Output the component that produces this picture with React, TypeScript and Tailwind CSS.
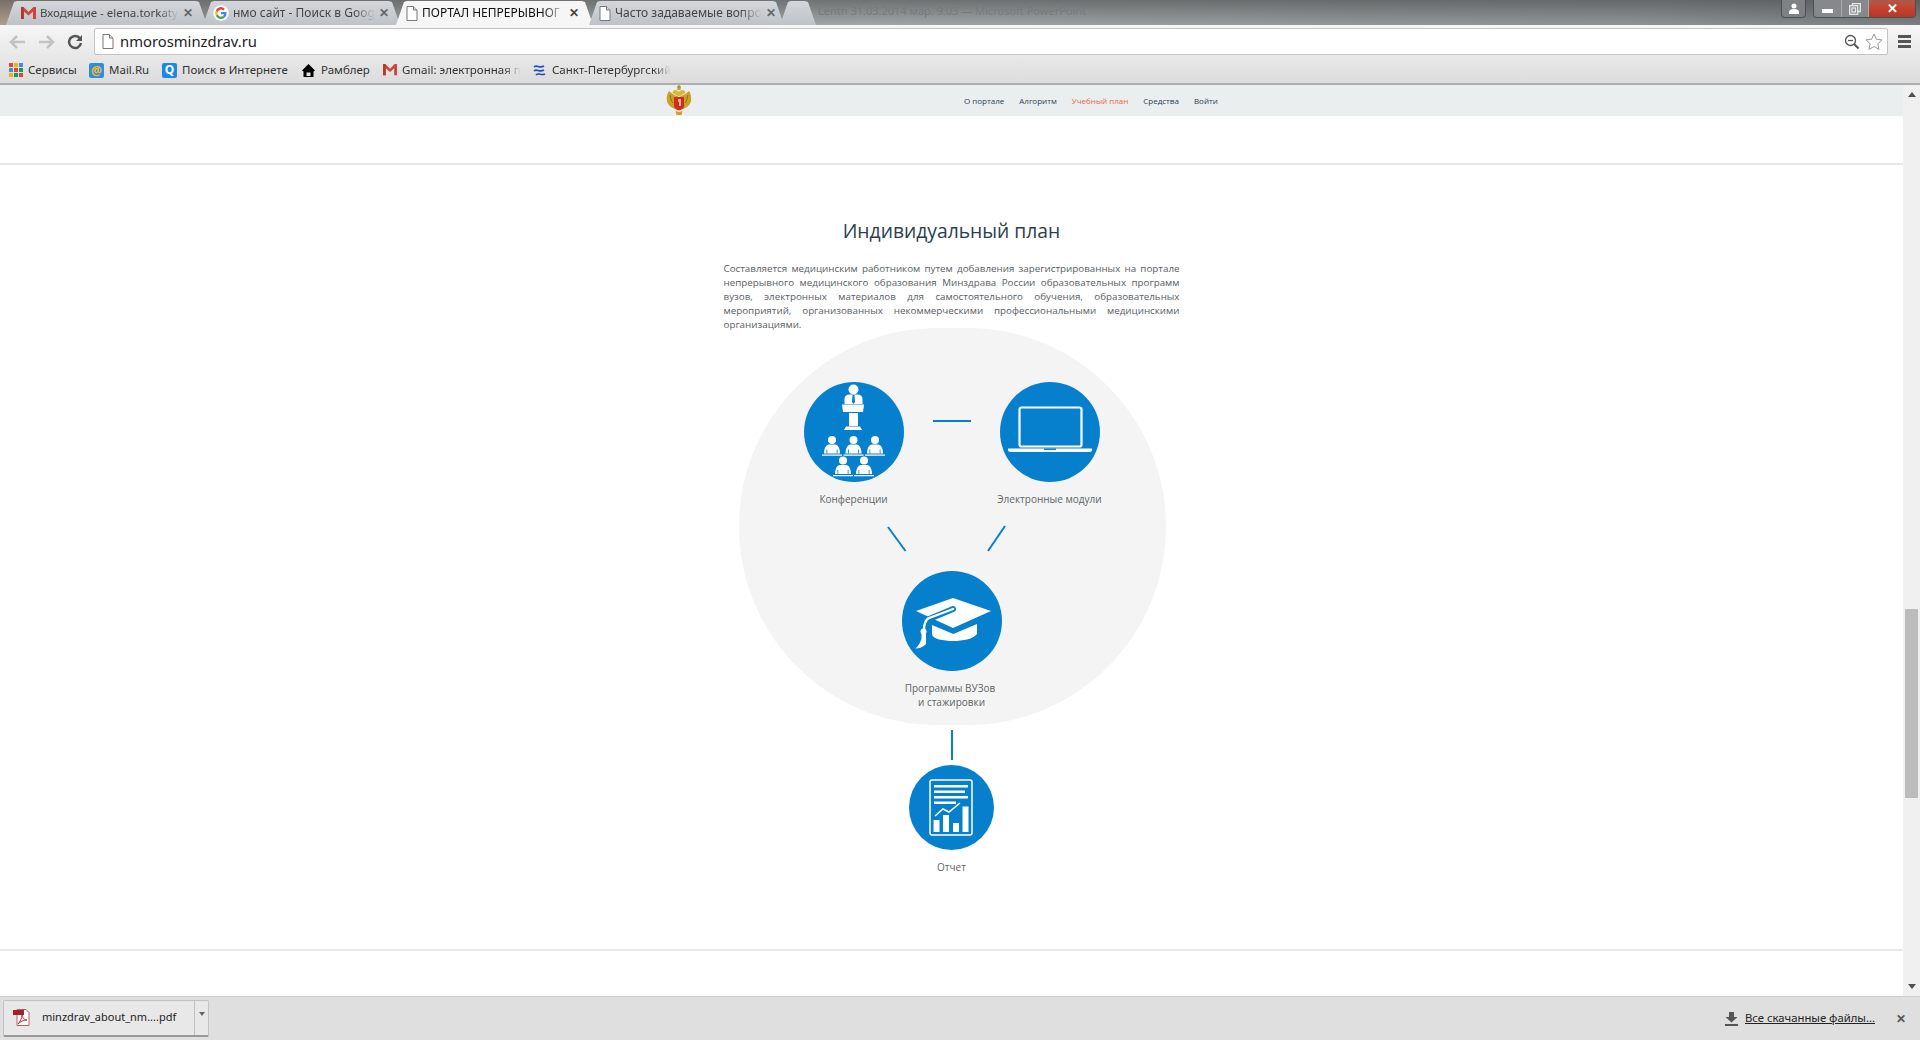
import React from "react";

const font = { fontFamily: '"Open Sans","Noto Sans",sans-serif' };
const fade = {
  maskImage: "linear-gradient(to right,#000 85%,transparent)",
  WebkitMaskImage: "linear-gradient(to right,#000 85%,transparent)",
};

function DocIcon() {
  return (
    <svg width="12" height="15" viewBox="0 0 12 15" className="shrink-0">
      <path d="M1 .5h6.5L11 4v10.500H1z" fill="#fff" stroke="#777" />
      <path d="M7.500.5V4H11" fill="#ddd" stroke="#777" />
    </svg>
  );
}

function GmailM({ s = 15 }: { s?: number }) {
  return (
    <svg width={s} height={s * 0.8} viewBox="0 0 15 12" className="shrink-0">
      <path d="M0 0h2.500L7.500 5 12.500 0H15v12h-3V4.500L7.500 8.500 3 4.500V12H0z" fill="#c9473a" />
      <path d="M0 0h2.500L3 12H0z" fill="#b23b30" />
    </svg>
  );
}

function GoogleG() {
  return (
    <svg width="16" height="16" viewBox="0 0 16 16" className="shrink-0">
      <circle cx="8" cy="8" r="7.800" fill="#fff" />
      <path d="M13.500 8.200c0-.4 0-.8-.1-1.200H8v2.300h3.100c-.2.800-.6 1.400-1.200 1.800l1.900 1.500c1.100-1 1.700-2.600 1.700-4.400z" fill="#4285f4" />
      <path d="M8 14c1.600 0 2.900-.5 3.800-1.400l-1.900-1.500c-.5.400-1.200.6-1.900.6-1.500 0-2.800-1-3.200-2.400l-2 1.500C3.800 12.700 5.800 14 8 14z" fill="#34a853" />
      <path d="M4.800 9.300a3.500 3.500 0 010-2.200l-2-1.500a6 6 0 000 5.200z" fill="#fbbc05" />
      <path d="M8 4.600c.9 0 1.600.3 2.200.9l1.700-1.700A6 6 0 008 2C5.800 2 3.800 3.300 2.800 5.400l2 1.600C5.200 5.600 6.500 4.600 8 4.600z" fill="#ea4335" />
    </svg>
  );
}

const tabShape = "[clip-path:polygon(0_100%,8px_1px,11px_0,calc(100%-11px)_0,calc(100%-8px)_1px,100%_100%)]";

function Tab({ icon, title, active, width, close = true, first }: { icon?: React.ReactNode; title?: string; active?: boolean; width: string; close?: boolean; first?: boolean }) {
  return (
    <div
      className={`${tabShape} h-[24px] -mr-[4px] flex items-center ${first ? "pl-[15px]" : "pl-[10px]"} pr-[14px] gap-[4px] shrink-0 ${active ? "bg-[#f6f6f6]" : "bg-gradient-to-b from-[#d3d6da] to-[#bfc3c8]"}`}
      style={{ width }}
    >
      {icon}
      {title && (
        <span className={`flex-1 whitespace-nowrap ${first ? "text-[11.500px]" : "text-[12px]"} ${active ? "text-[#111]" : "text-[#444]"}`} style={fade}>
          {title}
        </span>
      )}
      {close && <span className={`text-[12px] font-bold leading-none ${active ? "text-[#444]" : "text-[#666]"}`}>✕</span>}
    </div>
  );
}

function Bookmark({ icon, text, w, fadeOut }: { icon: React.ReactNode; text: string; w: string; fadeOut?: boolean }) {
  return (
    <div className="flex items-center gap-[5px] shrink-0" style={{ width: w }}>
      <span className="w-[15px] h-[15px] flex items-center justify-center shrink-0">{icon}</span>
      <span className="text-[11.500px] text-[#333] whitespace-nowrap" style={fadeOut ? fade : undefined}>
        {text}
      </span>
    </div>
  );
}

function Apps() {
  const c = ["#e34133", "#f4b400", "#3c8bf0", "#3c8bf0", "#e34133", "#0f9d58", "#f4b400", "#0f9d58", "#e34133"];
  return (
    <span className="grid grid-cols-3 gap-[1px] w-[14px]">
      {c.map((x, i) => (
        <span key={i} className="w-[4px] h-[4px]" style={{ background: x }} />
      ))}
    </span>
  );
}

function Crest() {
  return (
    <svg width="26" height="32" viewBox="0 0 26 32">
      <path d="M3 6C1 9 0 14 1.500 18 3 21 6 23 9 24L13 20 17 24C20 23 23 21 24.500 18 26 14 25 9 23 6 21 8 19 9 17.500 10L13 12 8.500 10C7 9 5 8 3 6z" fill="#c9a227" />
      <path d="M9.500 5c-2 0-3 1.500-3 3l2 1 3 2h3l3-2 2-1c0-1.500-1-3-3-3-1.500 0-3 1-3.500 2-.5-1-2-2-3.500-2z" fill="#d8b93a" />
      <path d="M11 1.500h4l-.5 3.500h-3z" fill="#bfa030" />
      <circle cx="13" cy="1.500" r="1.300" fill="#a88c20" />
      <path d="M4 10c1 3 1 6 3 8M22 10c-1 3-1 6-3 8" stroke="#7f7428" fill="none" />
      <path d="M8 12h10v9c0 2.500-2 3.500-5 4.500-3-1-5-2-5-4.500z" fill="#d3291f" />
      <path d="M12 14h3v7h-2v-4h-1z" fill="#dbb98e" />
      <path d="M9.500 26l3.500 1 3.500-1-1 4H10.500z" fill="#c9a227" />
    </svg>
  );
}

function Conference() {
  const p = (x: number, y: number) => (
    <g key={`${x}-${y}`} transform={`translate(${x} ${y})`}>
      <circle cx="0" cy="-14.500" r="4" fill="#fff" />
      <path d="M-8 -1c0-5 2-9 5-9h6c3 0 5 4 5 9z" fill="#fff" />
      <path d="M-5.500 -5h.8v4h-.8zM4.700 -5h.8v4h-.8z" fill="#0680cd" />
      <path d="M-10 0H10V1.200H-10z" fill="#fff" />
    </g>
  );
  return (
    <svg viewBox="0 0 100 100" className="w-[100px] h-[100px]">
      <circle cx="49.500" cy="7.500" r="5" fill="#fff" />
      <path d="M40.500 22v-5c0-3 2-4.500 5-4.500h8c3 0 5 1.500 5 4.500v5z" fill="#fff" />
      <path d="M48.500 13h2l.5 7-1.500 2-1.500-2z" fill="#0680cd" />
      <path d="M38 22.500h22l-1 7.500H39z" fill="#fff" />
      <path d="M45 31h9v13h-9z" fill="#fff" />
      <path d="M42 44.500h14l2 3.500H40z" fill="#fff" />
      {p(28, 72.500)}
      {p(49.500, 72.500)}
      {p(71, 72.500)}
      {p(39, 93)}
      {p(60, 93)}
    </svg>
  );
}

function Laptop() {
  return (
    <svg viewBox="0 0 100 100" className="w-[100px] h-[100px]">
      <rect x="19.500" y="25.500" width="62" height="39" rx="2" fill="none" stroke="#fff" strokeWidth="2.200" />
      <path d="M8 66.500h84v1.500c0 1-1 2-3 2H11c-2 0-3-1-3-2z" fill="#fff" />
      <path d="M44 66.500h12v1.500H44z" fill="#0680cd" />
    </svg>
  );
}

function Cap() {
  return (
    <svg viewBox="0 0 100 100" className="w-[100px] h-[100px]">
      <path d="M14 40 51 27 89 40 51 57z" fill="#fff" />
      <path d="M51 38 26 48.500" stroke="#0680cd" strokeWidth="6" strokeLinecap="round" fill="none" />
      <path d="M51 38 26 47.500C23 50 22 54 22 59" stroke="#fff" strokeWidth="2.400" strokeLinecap="round" fill="none" />
      <circle cx="21.500" cy="60.500" r="3" fill="#fff" />
      <path d="M19.500 62.500h4.500L24 73c-3 3-7 4.500-10.500 4.500 3-3 5-6 6-10z" fill="#fff" />
      <path d="M30 54 51.300 63 75 53v10c-4 5-14 7-24 7-9 0-21-2-21-7z" fill="#fff" />
    </svg>
  );
}

function Report() {
  return (
    <svg viewBox="0 0 85 85" className="w-[85px] h-[85px]">
      <rect x="21" y="15" width="42" height="55" rx="2" fill="none" stroke="#fff" strokeWidth="1.500" />
      <path d="M25 20h34v2.500H25zM25 25.500h31v2.500H25zM25 31h34v2.500H25zM25 36.500h22v2.500H25z" fill="#fff" />
      <path d="M26 51l8-7 6 3 11-9" fill="none" stroke="#fff" strokeWidth="1.500" />
      <path d="M24.500 55h6v12h-6zM34 50h6v17h-6zM44 58h6v9h-6zM53.500 41.500h6V67h-6z" fill="#fff" />
    </svg>
  );
}

function Node({ cls, d, label, children }: { cls: string; d: string; label: React.ReactNode; children: React.ReactNode }) {
  return (
    <div className={`absolute flex flex-col items-center w-[160px] ${cls}`}>
      <div className={`${d} rounded-full bg-[#0680cd] overflow-hidden`}>{children}</div>
      <div className="text-[10px] leading-[14px] text-[#5f6468] text-center mt-[10px]">{label}</div>
    </div>
  );
}

const lines = [
  "Составляется медицинским работником путем добавления зарегистрированных на портале",
  "непрерывного медицинского образования Минздрава России образовательных программ",
  "вузов, электронных материалов для самостоятельного обучения, образовательных",
  "мероприятий, организованных некоммерческими профессиональными медицинскими",
];

export default function App() {
  return (
    <div className="w-[1920px] h-[1040px] overflow-hidden flex flex-col bg-white" style={font}>
      {/* tab strip */}
      <div
        className="h-[25px] shrink-0 flex justify-between [background:linear-gradient(180deg,rgba(50,52,54,.45),rgba(50,52,54,0)),linear-gradient(90deg,#b09f8e_0%,#9a9c9c_8%,#a2a6a6_45%,#949899_70%,#909495_85%,#7b7f81_100%)] pl-[6px] pr-[4px] relative"
        style={{ fontFamily: '"Noto Sans",sans-serif' }}
      >
        <div className="flex items-end">
          <Tab first width="201px" icon={<GmailM />} title="Входящие - elena.torkaty" />
          <Tab width="197px" icon={<GoogleG />} title="нмо сайт - Поиск в Goog" />
          <Tab width="197px" active icon={<DocIcon />} title="ПОРТАЛ НЕПРЕРЫВНОГ" />
          <Tab width="195px" icon={<DocIcon />} title="Часто задаваемые вопро" />
          <Tab width="36px" close={false} />
        </div>
        <span className="absolute left-[818px] top-[3px] text-[11px] text-[#767a7c] whitespace-nowrap">Lenth 31.03.2014 мар. 9:03 — Microsoft PowerPoint</span>
        <div className="flex items-start gap-[7px]">
          <div className="w-[25px] h-[18px] rounded-b-[4px] border border-t-0 border-[#4d5052] bg-[#7d8183] flex items-center justify-center">
            <svg width="12" height="11" viewBox="0 0 12 11"><circle cx="6" cy="3" r="2.500" fill="#fff" /><path d="M1 11V9c0-2 2-3 5-3s5 1 5 3v2z" fill="#fff" /></svg>
          </div>
          <div className="flex h-[18px] w-[103px] rounded-b-[4px] border border-t-0 border-[#4d5052] overflow-hidden">
            <div className="w-[28px] flex items-center justify-center bg-[#85898b] border-r border-[#aaa]">
              <span className="w-[11px] h-[4px] bg-white mt-[5px]" />
            </div>
            <div className="w-[27px] flex items-center justify-center bg-[#85898b] border-r border-[#aaa]">
              <svg width="12" height="12" viewBox="0 0 12 12" fill="none" stroke="#e8e8e8" strokeWidth="1.300"><path d="M3.500 2.500V.7h7.800v7.800H9" /><rect x=".7" y="2.700" width="8" height="8.600" /><rect x="3" y="5" width="3.500" height="4" /></svg>
            </div>
            <div className="flex-1 flex items-center justify-center bg-gradient-to-b from-[#a95a4c] via-[#c8402c] to-[#b03a28] text-white text-[13px] font-bold leading-none">✕</div>
          </div>
        </div>
      </div>

      {/* toolbar */}
      <div className="h-[60px] shrink-0 bg-gradient-to-b from-[#f6f6f6] to-[#dcdcdc] flex flex-col border-b-2 border-[#aeaeae]">
        <div className="h-[33px] flex items-center relative">
          <div className="w-[94px] flex items-center pl-[9px] gap-[12px] shrink-0">
            <svg width="17" height="14" viewBox="0 0 17 14"><path d="M8 1 2 7l6 6M2 7h14" stroke="#c3c3c3" strokeWidth="2.500" fill="none" /></svg>
            <svg width="17" height="14" viewBox="0 0 17 14"><path d="M9 1l6 6-6 6M15 7H1" stroke="#c3c3c3" strokeWidth="2.500" fill="none" /></svg>
            <svg width="16" height="16" viewBox="0 0 16 16"><path d="M13 4.500A6 6 0 1 0 14 9" stroke="#555" strokeWidth="2.500" fill="none" /><path d="M15 1v6H9z" fill="#555" /></svg>
          </div>
          <div className="w-[1794px] h-[27px] bg-white border border-[#c4c4c4] rounded-[2px] flex items-center pl-[7px] pr-[4px] shrink-0">
            <DocIcon />
            <span className="ml-[6px] text-[14.800px] text-[#222]" style={{ fontFamily: '"Noto Sans",sans-serif' }}>nmorosminzdrav.ru</span>
            <span className="flex-1" />
            <svg width="16" height="16" viewBox="0 0 16 16" className="mr-[5px]"><circle cx="6.500" cy="6.500" r="5" stroke="#555" strokeWidth="1.300" fill="none" /><path d="M4 6.500h5" stroke="#555" strokeWidth="1.300" /><path d="M10 10l4.500 4.500" stroke="#555" strokeWidth="2" /></svg>
            <svg width="18" height="18" viewBox="0 0 18 18"><path d="M9 1l2.400 5.300 5.600.6-4.200 3.800 1.200 5.700L9 13.500 4 16.400l1.200-5.700L1 6.900l5.600-.6z" fill="#fff" stroke="#999" /></svg>
          </div>
          <div className="flex-1 flex flex-col items-center gap-[2px]">
            <span className="w-[13px] h-[3px] bg-[#555]" />
            <span className="w-[13px] h-[3px] bg-[#555]" />
            <span className="w-[13px] h-[3px] bg-[#555]" />
          </div>
        </div>
        <div className="flex-1 flex items-center pl-[8px] pb-[1px]" style={{ fontFamily: '"Noto Sans",sans-serif' }}>
          <Bookmark w="81px" icon={<Apps />} text="Сервисы" />
          <Bookmark w="73px" icon={<span className="w-[15px] h-[15px] rounded-[2px] bg-[#2d8fdc] text-[#ffb52e] text-[12px] leading-[15px] text-center font-bold">@</span>} text="Mail.Ru" />
          <Bookmark w="139px" icon={<span className="w-[15px] h-[15px] rounded-[2px] bg-[#1e88e5] text-white text-[12px] leading-[14px] text-center font-bold">Q</span>} text="Поиск в Интернете" />
          <Bookmark w="81px" icon={<svg width="15" height="15" viewBox="0 0 15 15"><path d="M7.500 1 1 7.500l1.500 1V14h10V8.500l1.500-1zM5.500 13V9.500h4V13z" fill="#000" fillRule="evenodd" /></svg>} text="Рамблер" />
          <Bookmark w="150px" fadeOut icon={<GmailM s={14} />} text="Gmail: электронная п" />
          <Bookmark w="135px" fadeOut icon={<svg width="14" height="12" viewBox="0 0 14 12"><path d="M1 3c3-3 5 2 10-1M1 7c3-3 5 2 10-1M3 11c3-3 5 1 9-1" stroke="#1f4fc4" strokeWidth="1.600" fill="none" /></svg>} text="Санкт-Петербургский" />
        </div>
      </div>

      {/* page viewport */}
      <div className="flex-1 flex min-h-0 relative">
        <div className="flex-1 flex flex-col min-w-0">
          <header className="h-[31px] shrink-0 bg-[#ebeeef] flex items-center pl-[666px]">
            <Crest />
            <nav className="ml-[272px] flex gap-[15px] text-[8px] font-medium text-[#2c3e50] whitespace-nowrap mt-[1px]">
              <span>О портале</span>
              <span>Алгоритм</span>
              <span className="text-[#f4604e]">Учебный план</span>
              <span>Средства</span>
              <span>Войти</span>
            </nav>
          </header>
          <div className="h-[49px] shrink-0 border-b-2 border-[#e7e7e7]" />
          <main className="h-[786px] shrink-0 flex flex-col items-center border-b-2 border-[#e7e7e7]">
            <h2 className="mt-[52px] text-[19.300px] leading-[28px] font-medium text-[#2c3e50]">Индивидуальный план</h2>
            <div className="mt-[17px] w-[456px] text-[9.800px] leading-[14px] text-[#5a6065] text-justify">
              {lines.map((l) => (
                <p key={l} className="[text-align-last:justify]">{l}</p>
              ))}
              <p>организациями.</p>
            </div>
            <div className="relative w-[500px] h-[560px] shrink-0 mt-[-5px]">
              <div className="absolute left-[37px] top-[1px] w-[427px] h-[397px] rounded-full bg-[#f4f4f4]" />
              <Node cls="left-[72px] top-[55px]" d="w-[100px] h-[100px]" label="Конференции"><Conference /></Node>
              <Node cls="left-[268px] top-[55px]" d="w-[100px] h-[100px]" label="Электронные модули"><Laptop /></Node>
              <Node cls="left-[170px] top-[244px]" d="w-[100px] h-[100px]" label={<><span className="block pr-[3px]">Программы ВУЗов</span>и стажировки</>}><Cap /></Node>
              <Node cls="left-[170px] top-[438px]" d="w-[85px] h-[85px]" label="Отчет"><Report /></Node>
              <svg className="absolute left-0 top-0" width="500" height="560" fill="none" stroke="#0680cd" strokeWidth="2">
                <path d="M231 94h38" />
                <path d="M186 200l17.500 24" />
                <path d="M303 199l-17 25" />
                <path d="M250 403v30" />
              </svg>
            </div>
          </main>
        </div>
        {/* scrollbar */}
        <div className="w-[17px] shrink-0 bg-[#f0f0f0] flex flex-col items-center justify-between py-[7px] relative">
          <span className="w-0 h-0 border-x-[4px] border-x-transparent border-b-[5px] border-b-[#505050]" />
          <span className="absolute left-[2px] top-[524px] w-[13px] h-[189px] bg-[#bcbcbc]" />
          <span className="w-0 h-0 border-x-[4px] border-x-transparent border-t-[5px] border-t-[#505050]" />
        </div>
      </div>

      {/* download bar */}
      <div className="h-[44px] shrink-0 bg-[#dfdfdf] border-t border-[#cfcfcf] flex items-center pl-[3px] pr-[14px]" style={{ fontFamily: '"Noto Sans",sans-serif' }}>
        <div className="h-[37px] w-[206px] bg-[#e8e8e8] border border-[#c2c2c2] border-b-2 border-b-[#999] rounded-[2px] flex mb-[1px]">
          <div className="flex-1 flex items-center pl-[9px] border-r border-[#c2c2c2]">
            <svg width="17" height="17" viewBox="0 0 17 17" className="shrink-0">
              <path d="M4 .5h9l3 3v13H4z" fill="#fff" stroke="#a66" />
              <path d="M0 1h11v5H0z" fill="#a5202a" />
              <path d="M5 15c2-2 4-6 4-9 1 4 3 5 5 5-3 0-6 1-9 4z" fill="none" stroke="#c0272d" />
            </svg>
            <span className="ml-[12px] text-[11px] text-[#222] whitespace-nowrap">minzdrav_about_nm....pdf</span>
          </div>
          <div className="w-[13px] flex justify-center pt-[11px]">
            <span className="w-0 h-0 border-x-[3.500px] border-x-transparent border-t-[4px] border-t-[#666]" />
          </div>
        </div>
        <span className="flex-1" />
        <svg width="15" height="14" viewBox="0 0 15 14" className="mr-[6px]"><path d="M5 0h5v5h3.500L7.500 10.500 1.500 5H5zM1 12h13v2H1z" fill="#555" /></svg>
        <span className="text-[11.300px] text-[#222] underline whitespace-nowrap">Все скачанные файлы...</span>
        <span className="ml-[21px] text-[12px] font-bold text-[#555] leading-none">✕</span>
      </div>
    </div>
  );
}
